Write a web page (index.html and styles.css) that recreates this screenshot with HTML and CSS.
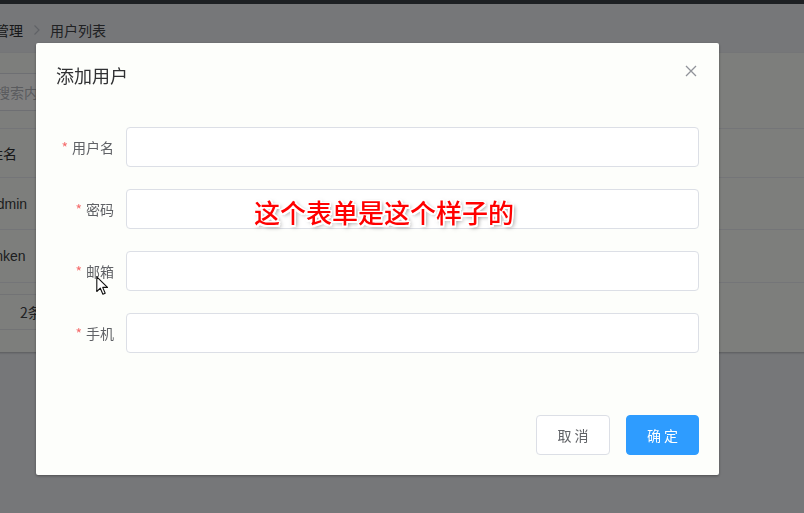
FILE: index.html
```html
<!DOCTYPE html>
<html lang="zh-CN">
<head>
<meta charset="utf-8">
<title>添加用户</title>
<link rel="stylesheet" href="styles.css">
</head>
<body>
<div class="topbar"></div>
<div class="page">
  <div class="breadcrumb">
    <span class="bc-item bc-strong">用户管理</span>
    <svg class="bc-sep" width="9" height="12" viewBox="0 0 9 12"><path d="M2.5 1.5 L7 6 L2.5 10.5" fill="none" stroke="#c0c4cc" stroke-width="1.2"/></svg>
    <span class="bc-item">用户列表</span>
  </div>
  <div class="card">
    <div class="search-row">
      <div class="search-input">请输入搜索内容</div>
    </div>
    <div class="table">
      <div class="tr th"><div class="td">姓名</div></div>
      <div class="tr r1"><div class="td">admin</div></div>
      <div class="tr r2"><div class="td">linken</div></div>
    </div>
    <div class="pager"><span class="pager-total">2条</span></div>
  </div>
</div>

<div class="mask"></div>

<div class="dialog-wrapper">
  <div class="dialog">
    <div class="dialog-header">
      <span class="dialog-title">添加用户</span>
      <span class="dialog-close">
        <svg width="16" height="16" viewBox="0 0 16 16"><path d="M3 3 L13 13 M13 3 L3 13" stroke="#909399" stroke-width="1.3" fill="none"/></svg>
      </span>
    </div>
    <div class="dialog-body">
      <div class="form-item"><label class="label"><span class="req">*</span>用户名</label><div class="input"></div></div>
      <div class="form-item"><label class="label"><span class="req">*</span>密码</label><div class="input"></div></div>
      <div class="form-item"><label class="label"><span class="req">*</span>邮箱</label><div class="input"></div></div>
      <div class="form-item"><label class="label"><span class="req">*</span>手机</label><div class="input"></div></div>
    </div>
    <div class="dialog-footer">
      <button class="btn btn-cancel">取 消</button>
      <button class="btn btn-primary">确 定</button>
    </div>
  </div>
</div>

<div class="caption">这个表单是这个样子的</div>

<svg class="cursor" width="14" height="20" viewBox="0 0 14 20"><path d="M0.8 0.8 L0.8 15.5 L4.3 12.2 L6.9 18.2 L9.2 17.2 L6.7 11.4 L11.5 11.4 Z" fill="#fff" stroke="#111" stroke-width="1.1" stroke-linejoin="round"/></svg>
</body>
</html>
```
FILE: styles.css
```css
html, body {
  margin: 0;
  padding: 0;
}
body {
  width: 804px;
  height: 513px;
  overflow: hidden;
  background: #eceef3;
  font-family: "Liberation Sans", "Noto Sans CJK SC", sans-serif;
  font-size: 14px;
  color: #303133;
  position: relative;
}
.topbar {
  height: 4px;
  background: #3a4047;
}
.page {
  margin-left: -67px;
  width: 1000px;
}
.breadcrumb {
  display: flex;
  align-items: center;
  padding: 16px 0 0 34px;
  height: 20px;
  line-height: 20px;
  font-family: "Noto Sans CJK SC", sans-serif;
}
.bc-item {
  color: #404246;
}
.bc-strong {
  color: #303133;
}
.bc-sep {
  margin: 0 9px 0 9px;
}
.card {
  margin-top: 13px;
  background: #fbfcf9;
  padding: 20px 20px 22px;
  box-shadow: 0 1px 2px rgba(0,0,0,.25);
}
.search-row {
  display: flex;
}
.search-input {
  width: 300px;
  height: 38px;
  margin-left: -15px;
  box-sizing: border-box;
  border: 1px solid #dcdfe6;
  border-radius: 4px;
  background: #fff;
  padding-left: 15px;
  line-height: 36px;
  color: #b4b7bd;
  font-family: "Noto Sans CJK SC", sans-serif;
}
.table {
  margin-top: 17px;
  border-top: 1px solid #e9ebf0;
}
.tr {
  display: flex;
  align-items: center;
  border-bottom: 1px solid #e9ebf0;
}
.th {
  height: 48px;
  color: #303133;
  font-family: "Noto Sans CJK SC", sans-serif;
}
.r1 { height: 51px; }
.r2 { height: 52px; }
.td {
  padding-left: 36px;
  color: #3a3c40;
}
.th .td {
  color: #303133;
}
.pager {
  margin-top: 11px;
  width: 400px;
  height: 34px;
  border-top: 1px solid #e4e6eb;
  border-bottom: 1px solid #e4e6eb;
  display: flex;
  align-items: center;
  padding-left: 67px;
  box-sizing: content-box;
  font-family: "Noto Sans CJK SC", sans-serif;
  color: #404246;
}
.mask {
  position: fixed;
  inset: 0;
  background: rgba(0,0,0,.5);
}
.dialog-wrapper {
  position: fixed;
  inset: 0;
}
.dialog {
  width: 683px;
  margin: 43px 0 0 36px;
  background: #fdfefb;
  border-radius: 2px;
  box-shadow: 0 1px 3px rgba(0,0,0,.35);
  font-family: "Noto Sans CJK SC", sans-serif;
}
.dialog-header {
  padding: 20px 20px 10px;
  display: flex;
  justify-content: space-between;
  align-items: flex-start;
}
.dialog-title {
  font-size: 18px;
  line-height: 24px;
  color: #303133;
}
.dialog-close {
  width: 16px;
  height: 16px;
  display: block;
}
.dialog-close svg {
  display: block;
}
.dialog-body {
  padding: 30px 20px;
}
.form-item {
  display: flex;
  margin-bottom: 22px;
}
.label {
  width: 70px;
  flex: none;
  box-sizing: border-box;
  padding-right: 12px;
  text-align: right;
  line-height: 40px;
  font-size: 14px;
  color: #606266;
}
.req {
  color: #f56c6c;
  margin-right: 4px;
}
.input {
  flex: 1;
  height: 40px;
  box-sizing: border-box;
  border: 1px solid #dcdfe6;
  border-radius: 4px;
  background: #fff;
}
.dialog-footer {
  padding: 10px 20px 20px;
  display: flex;
  justify-content: flex-end;
  gap: 16px;
}
.btn {
  height: 40px;
  padding: 0;
  font-family: "Noto Sans CJK SC", sans-serif;
  font-size: 14px;
  border-radius: 4px;
  border: 1px solid #dcdfe6;
  background: #fff;
  color: #606266;
}
.btn-cancel {
  width: 74px;
}
.btn-primary {
  width: 73px;
  background: #2e9cff;
  border-color: #2e9cff;
  color: #fff;
}
.caption {
  position: absolute;
  left: 254px;
  top: 196px;
  font-family: "Noto Sans CJK SC", sans-serif;
  font-size: 26px;
  line-height: 32px;
  font-weight: 500;
  color: #ff0000;
  white-space: nowrap;
  text-shadow:
    1.5px 0 0 #fff, -1.5px 0 0 #fff, 0 1.5px 0 #fff, 0 -1.5px 0 #fff,
    1.5px 1.5px 0 #fff, -1.5px -1.5px 0 #fff, 1.5px -1.5px 0 #fff, -1.5px 1.5px 0 #fff,
    2px 2px 4px rgba(0,0,0,.55);
}
.cursor {
  position: absolute;
  left: 96px;
  top: 276px;
}
```
